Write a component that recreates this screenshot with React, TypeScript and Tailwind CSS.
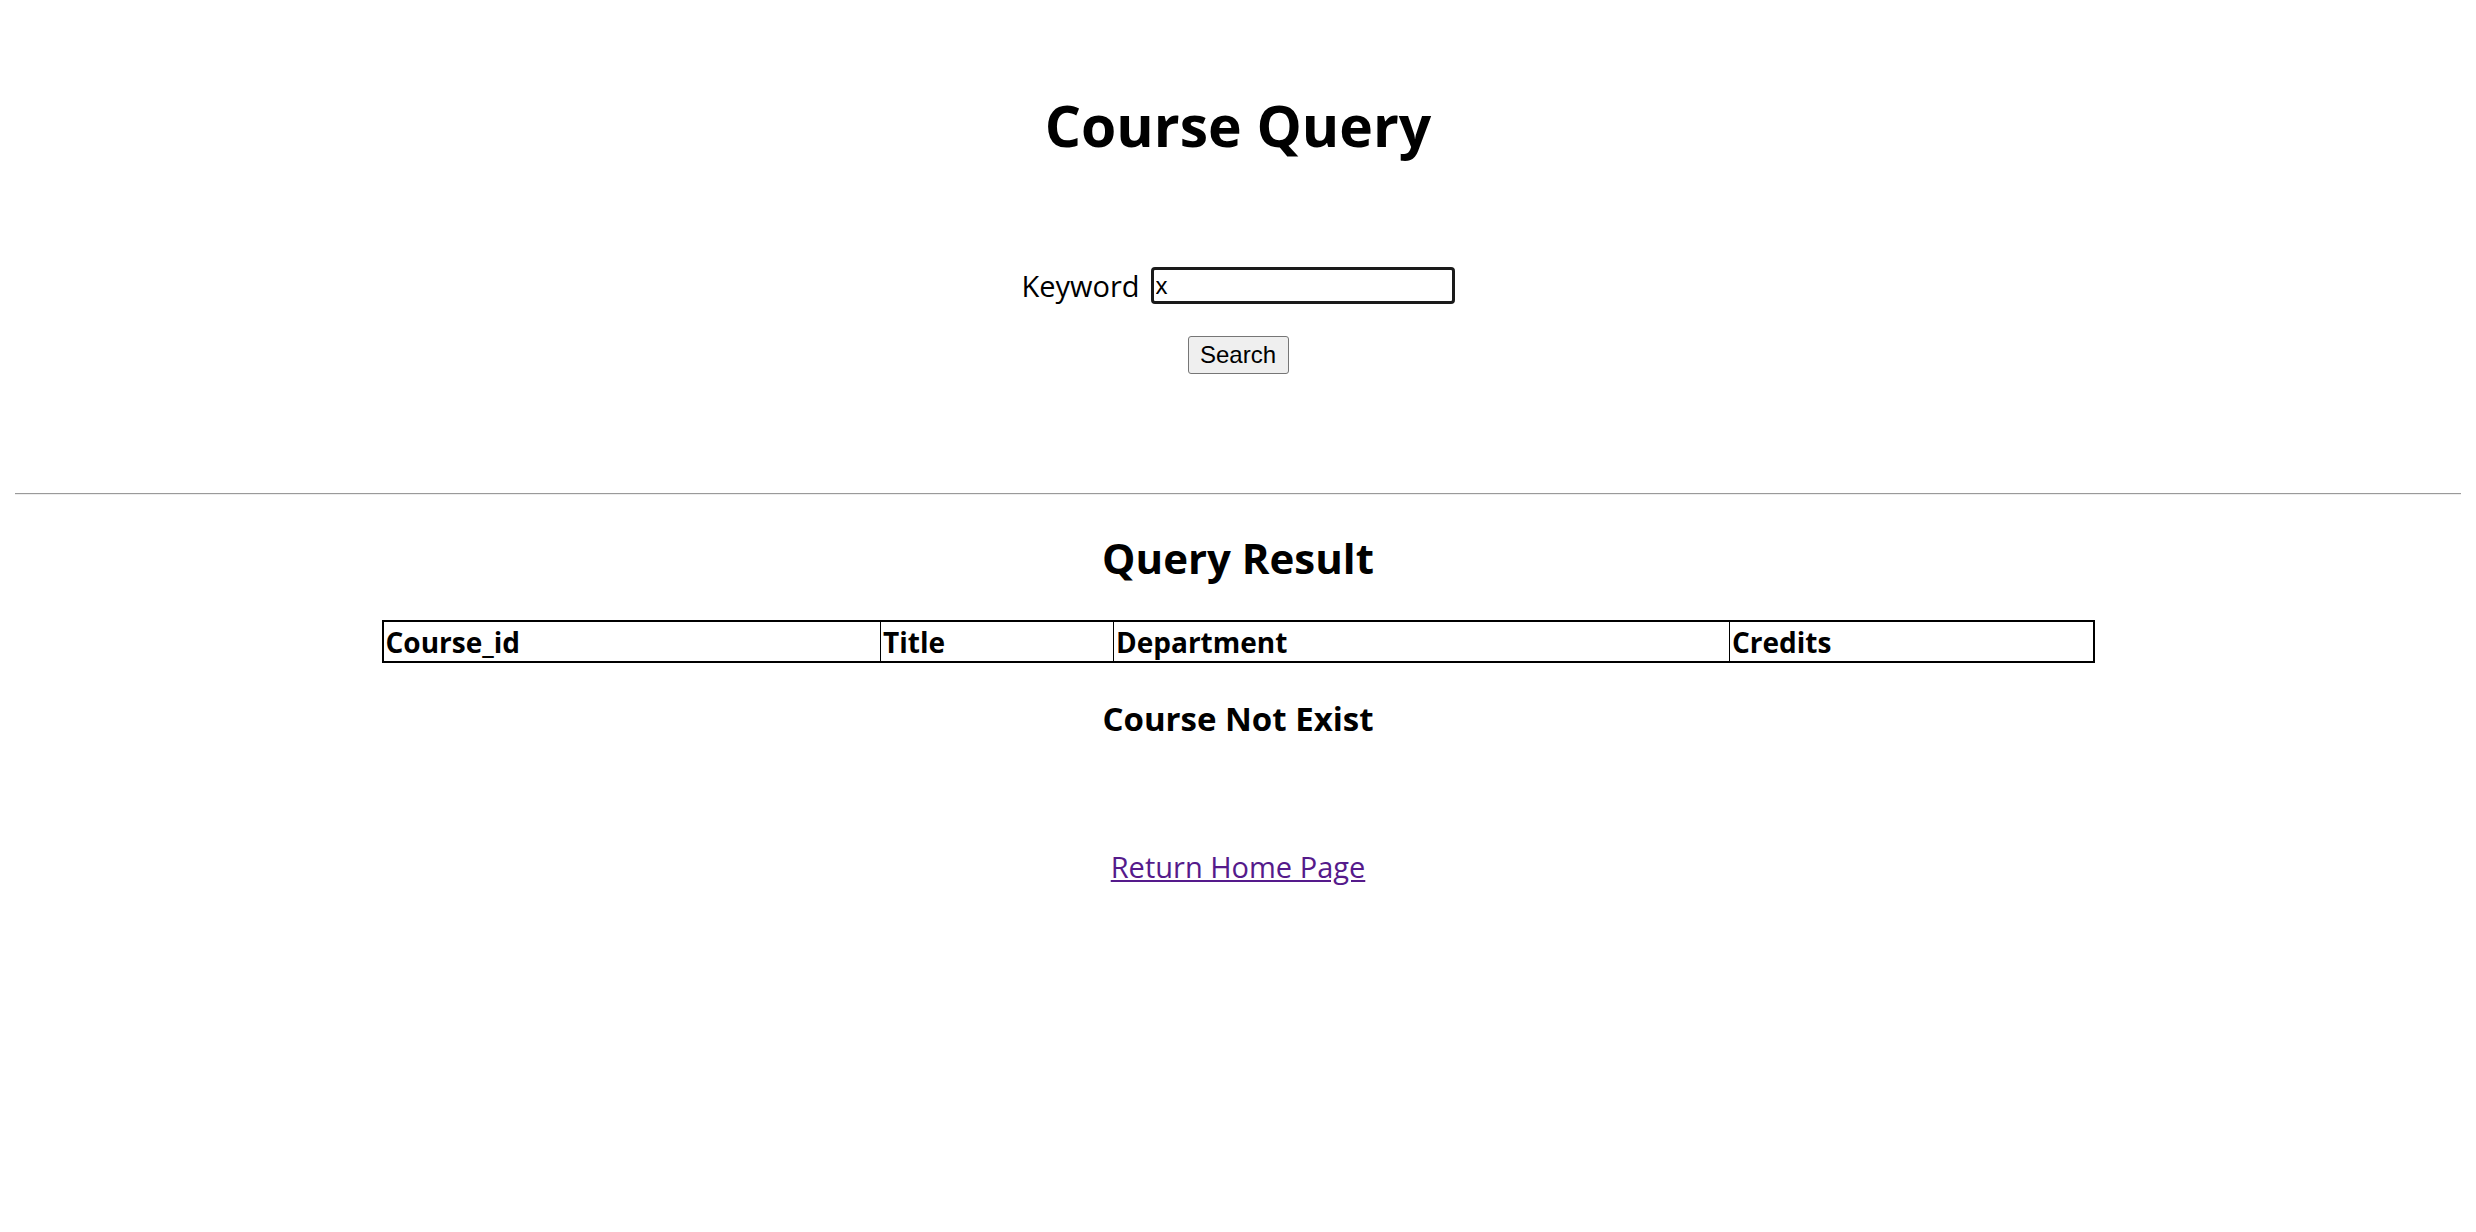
export default function App() {
  return (
    <div className="min-h-screen bg-white px-[15px] font-['Open_Sans','Noto_Sans',sans-serif] text-black">
      <h1 className="pt-[85px] text-center text-[57px] font-bold leading-[80px]">Course Query</h1>

      <form className="mt-[102px] flex flex-col items-center" onSubmit={(e) => e.preventDefault()}>
        <div className="flex items-center">
          <label className="text-[29px] leading-[37px]">Keyword</label>
          <input
            defaultValue="x"
            className="ml-[11px] h-[37px] w-[304px] rounded-[4px] border-[3px] border-[#1a1a1a] px-[2px] font-['Liberation_Sans',Arial,sans-serif] text-[24px] leading-none outline-none"
          />
        </div>
        <button
          type="submit"
          className="mt-[32px] h-[38px] w-[101px] rounded-[3px] border border-[#767676] bg-[#efefef] font-['Liberation_Sans',Arial,sans-serif] text-[24px] leading-none"
        >
          Search
        </button>
      </form>

      <hr className="mt-[119px] border-t border-[#9a9a9a] border-b border-b-[#eeeeee]" />

      <h2 className="mt-[37px] text-center text-[42px] font-bold leading-[52px]">Query Result</h2>

      <div className="mt-[36px] flex justify-center">
        <table className="w-[1713px] border-collapse border-2 border-black text-left">
          <thead>
            <tr className="h-[41px] text-[28px] font-bold leading-[36px]">
              <th className="w-[498px] px-[2px] py-0 font-bold">Course_id</th>
              <th className="w-[233px] border-l border-black px-[2px] font-bold">Title</th>
              <th className="w-[616px] border-l border-black px-[2px] font-bold">Department</th>
              <th className="border-l border-black px-[2px] font-bold">Credits</th>
            </tr>
          </thead>
        </table>
      </div>

      <h3 className="mt-[33px] text-center text-[33px] font-bold leading-[46px]">Course Not Exist</h3>

      <div className="mt-[105px] text-center">
        <a href="#" className="text-[29px] leading-[40px] text-[#551a8b] underline">
          Return Home Page
        </a>
      </div>
    </div>
  );
}
